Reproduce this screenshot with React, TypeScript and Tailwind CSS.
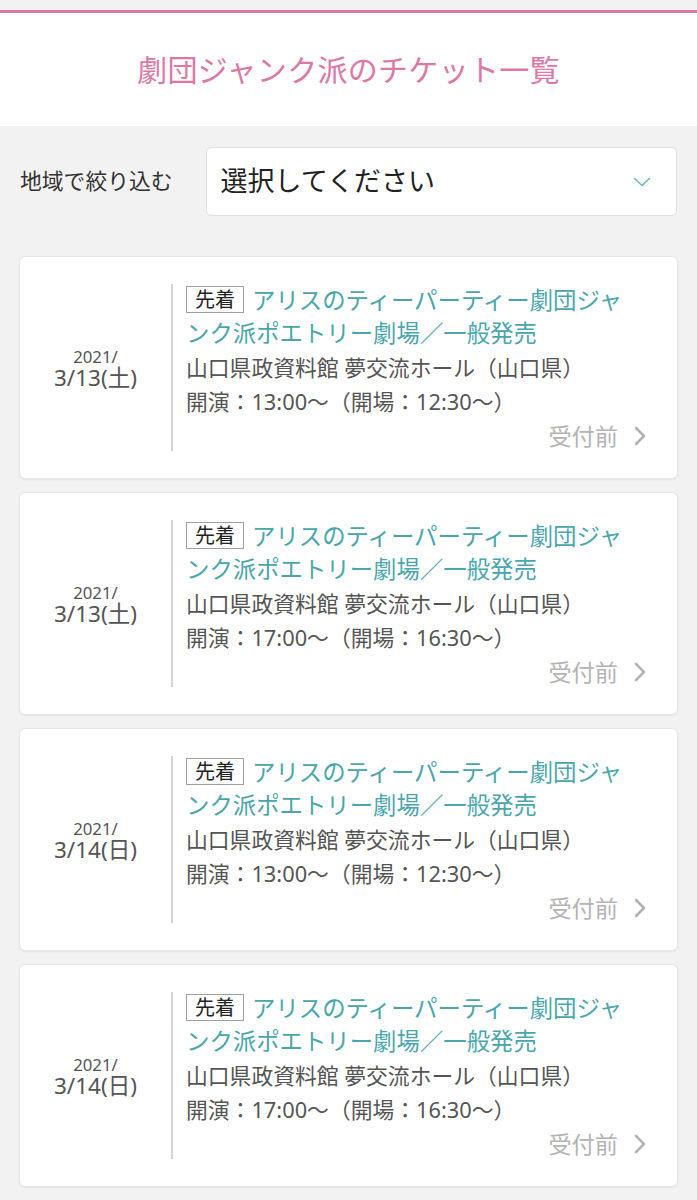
import React from "react";

const items = [
  { date: "3/13(土)", time: "開演：13:00〜（開場：12:30〜）" },
  { date: "3/13(土)", time: "開演：17:00〜（開場：16:30〜）" },
  { date: "3/14(日)", time: "開演：13:00〜（開場：12:30〜）" },
  { date: "3/14(日)", time: "開演：17:00〜（開場：16:30〜）" },
];

function Card({ date, time }: { date: string; time: string }) {
  return (
    <div className="flex h-[223px] rounded-[6px] border border-[#e6e6e6] bg-white shadow-[0_1px_2px_rgba(0,0,0,0.06)]">
      <div className="flex w-[151px] flex-col items-center justify-center pt-[2px] text-[#555]">
        <div className="text-[16.8px] leading-[17px]">2021/</div>
        <div className="text-[22.5px] leading-[25px]">{date}</div>
      </div>
      <div className="my-[27px] w-[2px] bg-[#d4d4d4]" />
      <div className="flex flex-1 flex-col pl-[13px] pr-[30px] pt-[27px]">
        <div className="pr-[12px] text-[23.4px] leading-[33px] text-[#4aa6ad]">
          <span className="mr-[8px] inline-block border border-[#a0a0a0] px-[8px] align-top text-[20px] leading-[25px] text-[#222] mt-[2px]">
            先着
          </span>
          アリスのティーパーティー劇団ジャンク派ポエトリー劇場／一般発売
        </div>
        <div className="mt-[1px] text-[21.8px] leading-[34px] text-[#555]">
          山口県政資料館 夢交流ホール（山口県）
        </div>
        <div className="text-[21.8px] leading-[34px] text-[#555]">{time}</div>
        <div className="flex items-center justify-end gap-[15px] text-[23.2px] leading-[34px] text-[#b3b3b3]">
          <span>受付前</span>
          <svg width="14" height="22" viewBox="0 0 14 22" fill="none">
            <path d="M3 3 L11 11 L3 19" stroke="#b3b3b3" strokeWidth="2.6" strokeLinecap="round" strokeLinejoin="round" />
          </svg>
        </div>
      </div>
    </div>
  );
}

export default function App() {
  return (
    <div
      className="min-h-[1200px] bg-[#f2f2f2]"
      style={{ fontFamily: "'Noto Sans', 'Noto Sans CJK JP', sans-serif" }}
    >
      <div className="h-[10px]" />
      <div className="h-[3px] bg-[#dd78a6]" />
      <div className="flex h-[113px] items-center justify-center bg-white">
        <h1 className="text-[30px] tracking-[0.3px] text-[#dd78a6]">劇団ジャンク派のチケット一覧</h1>
      </div>
      <div className="flex items-center gap-[33px] px-[20px] pt-[21px]">
        <span className="text-[21.8px] text-[#333]">地域で絞り込む</span>
        <div className="flex h-[69px] flex-1 items-center justify-between rounded-[5px] border border-[#e0e0e0] bg-white pl-[14px] pr-[25px]">
          <span className="text-[27px] text-[#222]">選択してください</span>
          <svg width="18" height="10" viewBox="0 0 18 10" fill="none">
            <path d="M1 1 L9 8.5 L17 1" stroke="#6bb8bd" strokeWidth="1.6" />
          </svg>
        </div>
      </div>
      <div className="flex flex-col gap-[13px] px-[19px] pb-[20px] pt-[40px]">
        {items.map((it, i) => (
          <Card key={i} date={it.date} time={it.time} />
        ))}
      </div>
    </div>
  );
}
